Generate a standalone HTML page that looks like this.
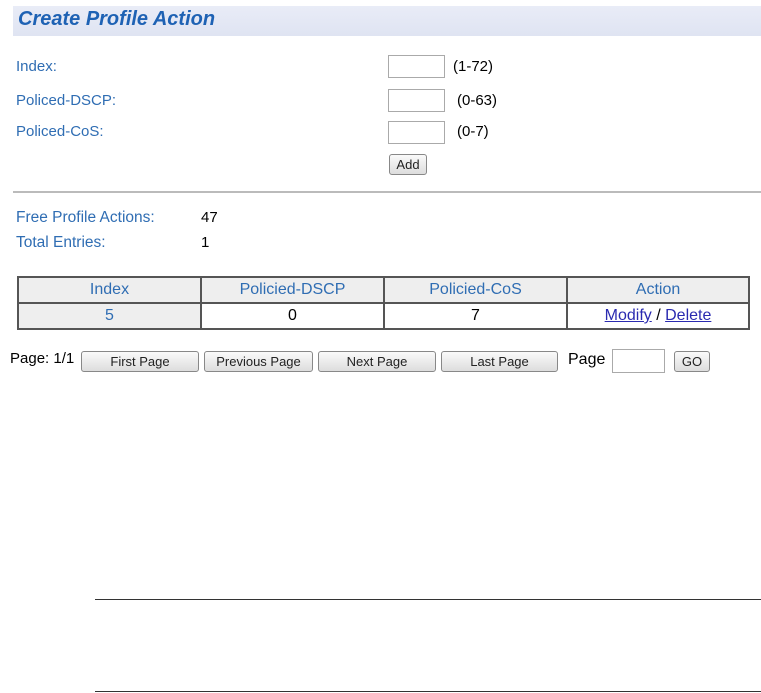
<!DOCTYPE html><html><head><style>
body{margin:0;width:761px;height:693px;background:#fff;font-family:"Liberation Sans",sans-serif;position:relative;overflow:hidden}
.a{position:absolute}
.hd{left:13px;top:6px;width:748px;height:30px;background:linear-gradient(#e9ecf7,#dfe4f2)}
.tt{left:18px;top:8px;font-size:20px;font-weight:bold;font-style:italic;color:#1e62b4}
.lb{color:#2f6db3;font-size:15px}
.in{width:55px;height:21px;border:1px solid #aaa;background:#fff;box-sizing:border-box}
.bt{border:1px solid #888;border-radius:3px;background:linear-gradient(#fafafa,#ddd);font-size:13px;color:#222;text-align:center;box-sizing:border-box;line-height:19px;height:21px}
table{position:absolute;left:17px;top:276px;width:733px;border-collapse:collapse;font-size:16px}
td{border:2px solid #555;text-align:center;height:24px;padding:0}
.g{background:#eee;color:#2f6db3}
a{color:#2a2ab0}
</style></head><body>
<div class="a hd"></div><div class="a tt">Create Profile Action</div>
<div class="a lb" style="left:16px;top:58px">Index:</div>
<div class="a lb" style="left:16px;top:92px">Policed-DSCP:</div>
<div class="a lb" style="left:16px;top:123px">Policed-CoS:</div>
<div class="a in" style="left:388px;top:55px;width:57px;height:23px"></div>
<div class="a in" style="left:388px;top:89px;width:57px;height:23px"></div>
<div class="a in" style="left:388px;top:121px;width:57px;height:23px"></div>
<div class="a" style="left:453px;top:58px;font-size:15px">(1-72)</div>
<div class="a" style="left:457px;top:92px;font-size:15px">(0-63)</div>
<div class="a" style="left:457px;top:123px;font-size:15px">(0-7)</div>
<div class="a bt" style="left:389px;top:154px;width:38px">Add</div>
<div class="a" style="left:13px;top:191px;width:748px;height:2px;background:#bbb"></div>
<div class="a lb" style="left:16px;top:209px;font-size:15.5px">Free Profile Actions:</div>
<div class="a lb" style="left:16px;top:234px;font-size:15.5px">Total Entries:</div>
<div class="a" style="left:201px;top:209px;font-size:15px">47</div>
<div class="a" style="left:201px;top:234px;font-size:15px">1</div>
<table><tr class="g"><td style="width:181px">Index</td><td style="width:181px">Policied-DSCP</td><td style="width:181px">Policied-CoS</td><td>Action</td></tr>
<tr><td class="g">5</td><td>0</td><td>7</td><td><a href="#">Modify</a> / <a href="#">Delete</a></td></tr></table>
<div class="a" style="left:10px;top:350px;font-size:15px">Page: 1/1</div>
<div class="a bt" style="left:81px;top:351px;width:118px">First Page</div>
<div class="a bt" style="left:204px;top:351px;width:109px">Previous Page</div>
<div class="a bt" style="left:318px;top:351px;width:118px">Next Page</div>
<div class="a bt" style="left:441px;top:351px;width:117px">Last Page</div>
<div class="a" style="left:568px;top:351px;font-size:16px">Page</div>
<div class="a in" style="left:612px;top:349px;width:53px;height:24px"></div>
<div class="a bt" style="left:674px;top:351px;width:36px">GO</div>
<div class="a" style="left:95px;top:599px;width:666px;height:1px;background:#333"></div>
<div class="a" style="left:95px;top:691px;width:666px;height:1px;background:#333"></div>
</body></html>
